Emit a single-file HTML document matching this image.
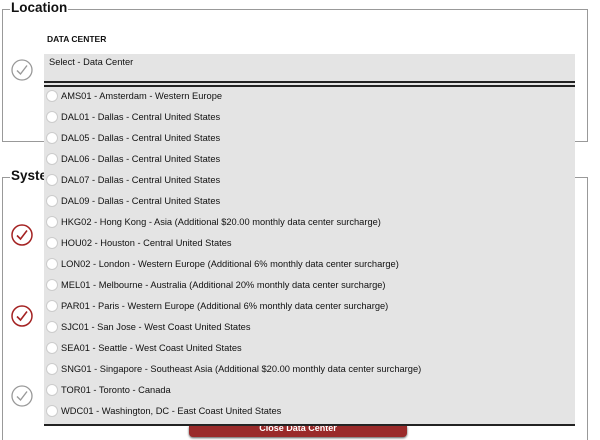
<!DOCTYPE html>
<html><head><style>
html,body{margin:0;width:600px;height:440px;overflow:hidden;}
body{background:#fff;position:relative;font-family:"Liberation Sans",Arial,sans-serif;}
.fs{position:absolute;border:1.5px solid #999;}
.lg{position:absolute;background:#fff;font-weight:bold;font-size:13.5px;color:#111;padding:0 1px;}
.panel{position:absolute;left:44px;top:54px;width:531px;height:370px;background:#e4e4e4;border-bottom:2px solid #222;}
.item{position:absolute;left:2px;font-size:9.3px;color:#111;height:14px;line-height:14px;white-space:nowrap;}
.item i{display:inline-block;width:12px;height:12px;border-radius:50%;background:#fff;border:1px solid #ccc;vertical-align:-3px;margin-right:3px;box-sizing:border-box;}
.chk{position:absolute;width:22px;height:22px;}
</style></head><body>
<div class="fs" style="left:2px;top:9px;width:584px;height:131px;"></div>
<div class="lg" style="left:10px;top:0px;">Location</div>
<div class="fs" style="left:2px;top:177px;width:584px;height:262px;border-bottom:none;"></div>
<div class="lg" style="left:10px;top:168px;">System</div>
<div style="position:absolute;left:47px;top:34px;font-size:8.5px;font-weight:bold;color:#111;">DATA CENTER</div>

<svg class="chk" style="left:11px;top:59px" viewBox="0 0 22 22"><circle cx="11" cy="11" r="10" fill="none" stroke="#999" stroke-width="1.3"/><path d="M6 11.5 L9.5 15 L16 6.5" fill="none" stroke="#999" stroke-width="1.4"/></svg>
<svg class="chk" style="left:11px;top:224px" viewBox="0 0 22 22"><circle cx="11" cy="11" r="10" fill="none" stroke="#a42222" stroke-width="1.5"/><path d="M6 11.5 L9.5 15 L16 6.5" fill="none" stroke="#a42222" stroke-width="1.6"/></svg>
<svg class="chk" style="left:11px;top:305px" viewBox="0 0 22 22"><circle cx="11" cy="11" r="10" fill="none" stroke="#a42222" stroke-width="1.5"/><path d="M6 11.5 L9.5 15 L16 6.5" fill="none" stroke="#a42222" stroke-width="1.6"/></svg>
<svg class="chk" style="left:11px;top:385px" viewBox="0 0 22 22"><circle cx="11" cy="11" r="10" fill="none" stroke="#999" stroke-width="1.3"/><path d="M6 11.5 L9.5 15 L16 6.5" fill="none" stroke="#999" stroke-width="1.4"/></svg>

<div class="panel">
<div style="position:absolute;left:5px;top:3px;font-size:9.3px;color:#111;">Select - Data Center</div>
<div style="position:absolute;left:0;right:0;top:27px;height:2px;background:#222"></div>
<div style="position:absolute;left:0;right:0;top:31px;height:2px;background:#222"></div>
<div class="item" style="top:35px"><i></i>AMS01 - Amsterdam - Western Europe</div>
<div class="item" style="top:56px"><i></i>DAL01 - Dallas - Central United States</div>
<div class="item" style="top:77px"><i></i>DAL05 - Dallas - Central United States</div>
<div class="item" style="top:98px"><i></i>DAL06 - Dallas - Central United States</div>
<div class="item" style="top:119px"><i></i>DAL07 - Dallas - Central United States</div>
<div class="item" style="top:140px"><i></i>DAL09 - Dallas - Central United States</div>
<div class="item" style="top:161px"><i></i>HKG02 - Hong Kong - Asia (Additional $20.00 monthly data center surcharge)</div>
<div class="item" style="top:182px"><i></i>HOU02 - Houston - Central United States</div>
<div class="item" style="top:203px"><i></i>LON02 - London - Western Europe (Additional 6% monthly data center surcharge)</div>
<div class="item" style="top:224px"><i></i>MEL01 - Melbourne - Australia (Additional 20% monthly data center surcharge)</div>
<div class="item" style="top:245px"><i></i>PAR01 - Paris - Western Europe (Additional 6% monthly data center surcharge)</div>
<div class="item" style="top:266px"><i></i>SJC01 - San Jose - West Coast United States</div>
<div class="item" style="top:287px"><i></i>SEA01 - Seattle - West Coast United States</div>
<div class="item" style="top:308px"><i></i>SNG01 - Singapore - Southeast Asia (Additional $20.00 monthly data center surcharge)</div>
<div class="item" style="top:329px"><i></i>TOR01 - Toronto - Canada</div>
<div class="item" style="top:350px"><i></i>WDC01 - Washington, DC - East Coast United States</div>
</div>
<div style="position:absolute;left:189px;top:426px;width:218px;height:11px;background:#9a2a2a;border-radius:0 0 4px 4px;box-shadow:0 1px 2px #555;color:#fff;font-size:9px;font-weight:bold;text-align:center;line-height:5px;overflow:hidden;">Close Data Center</div>
</body></html>
